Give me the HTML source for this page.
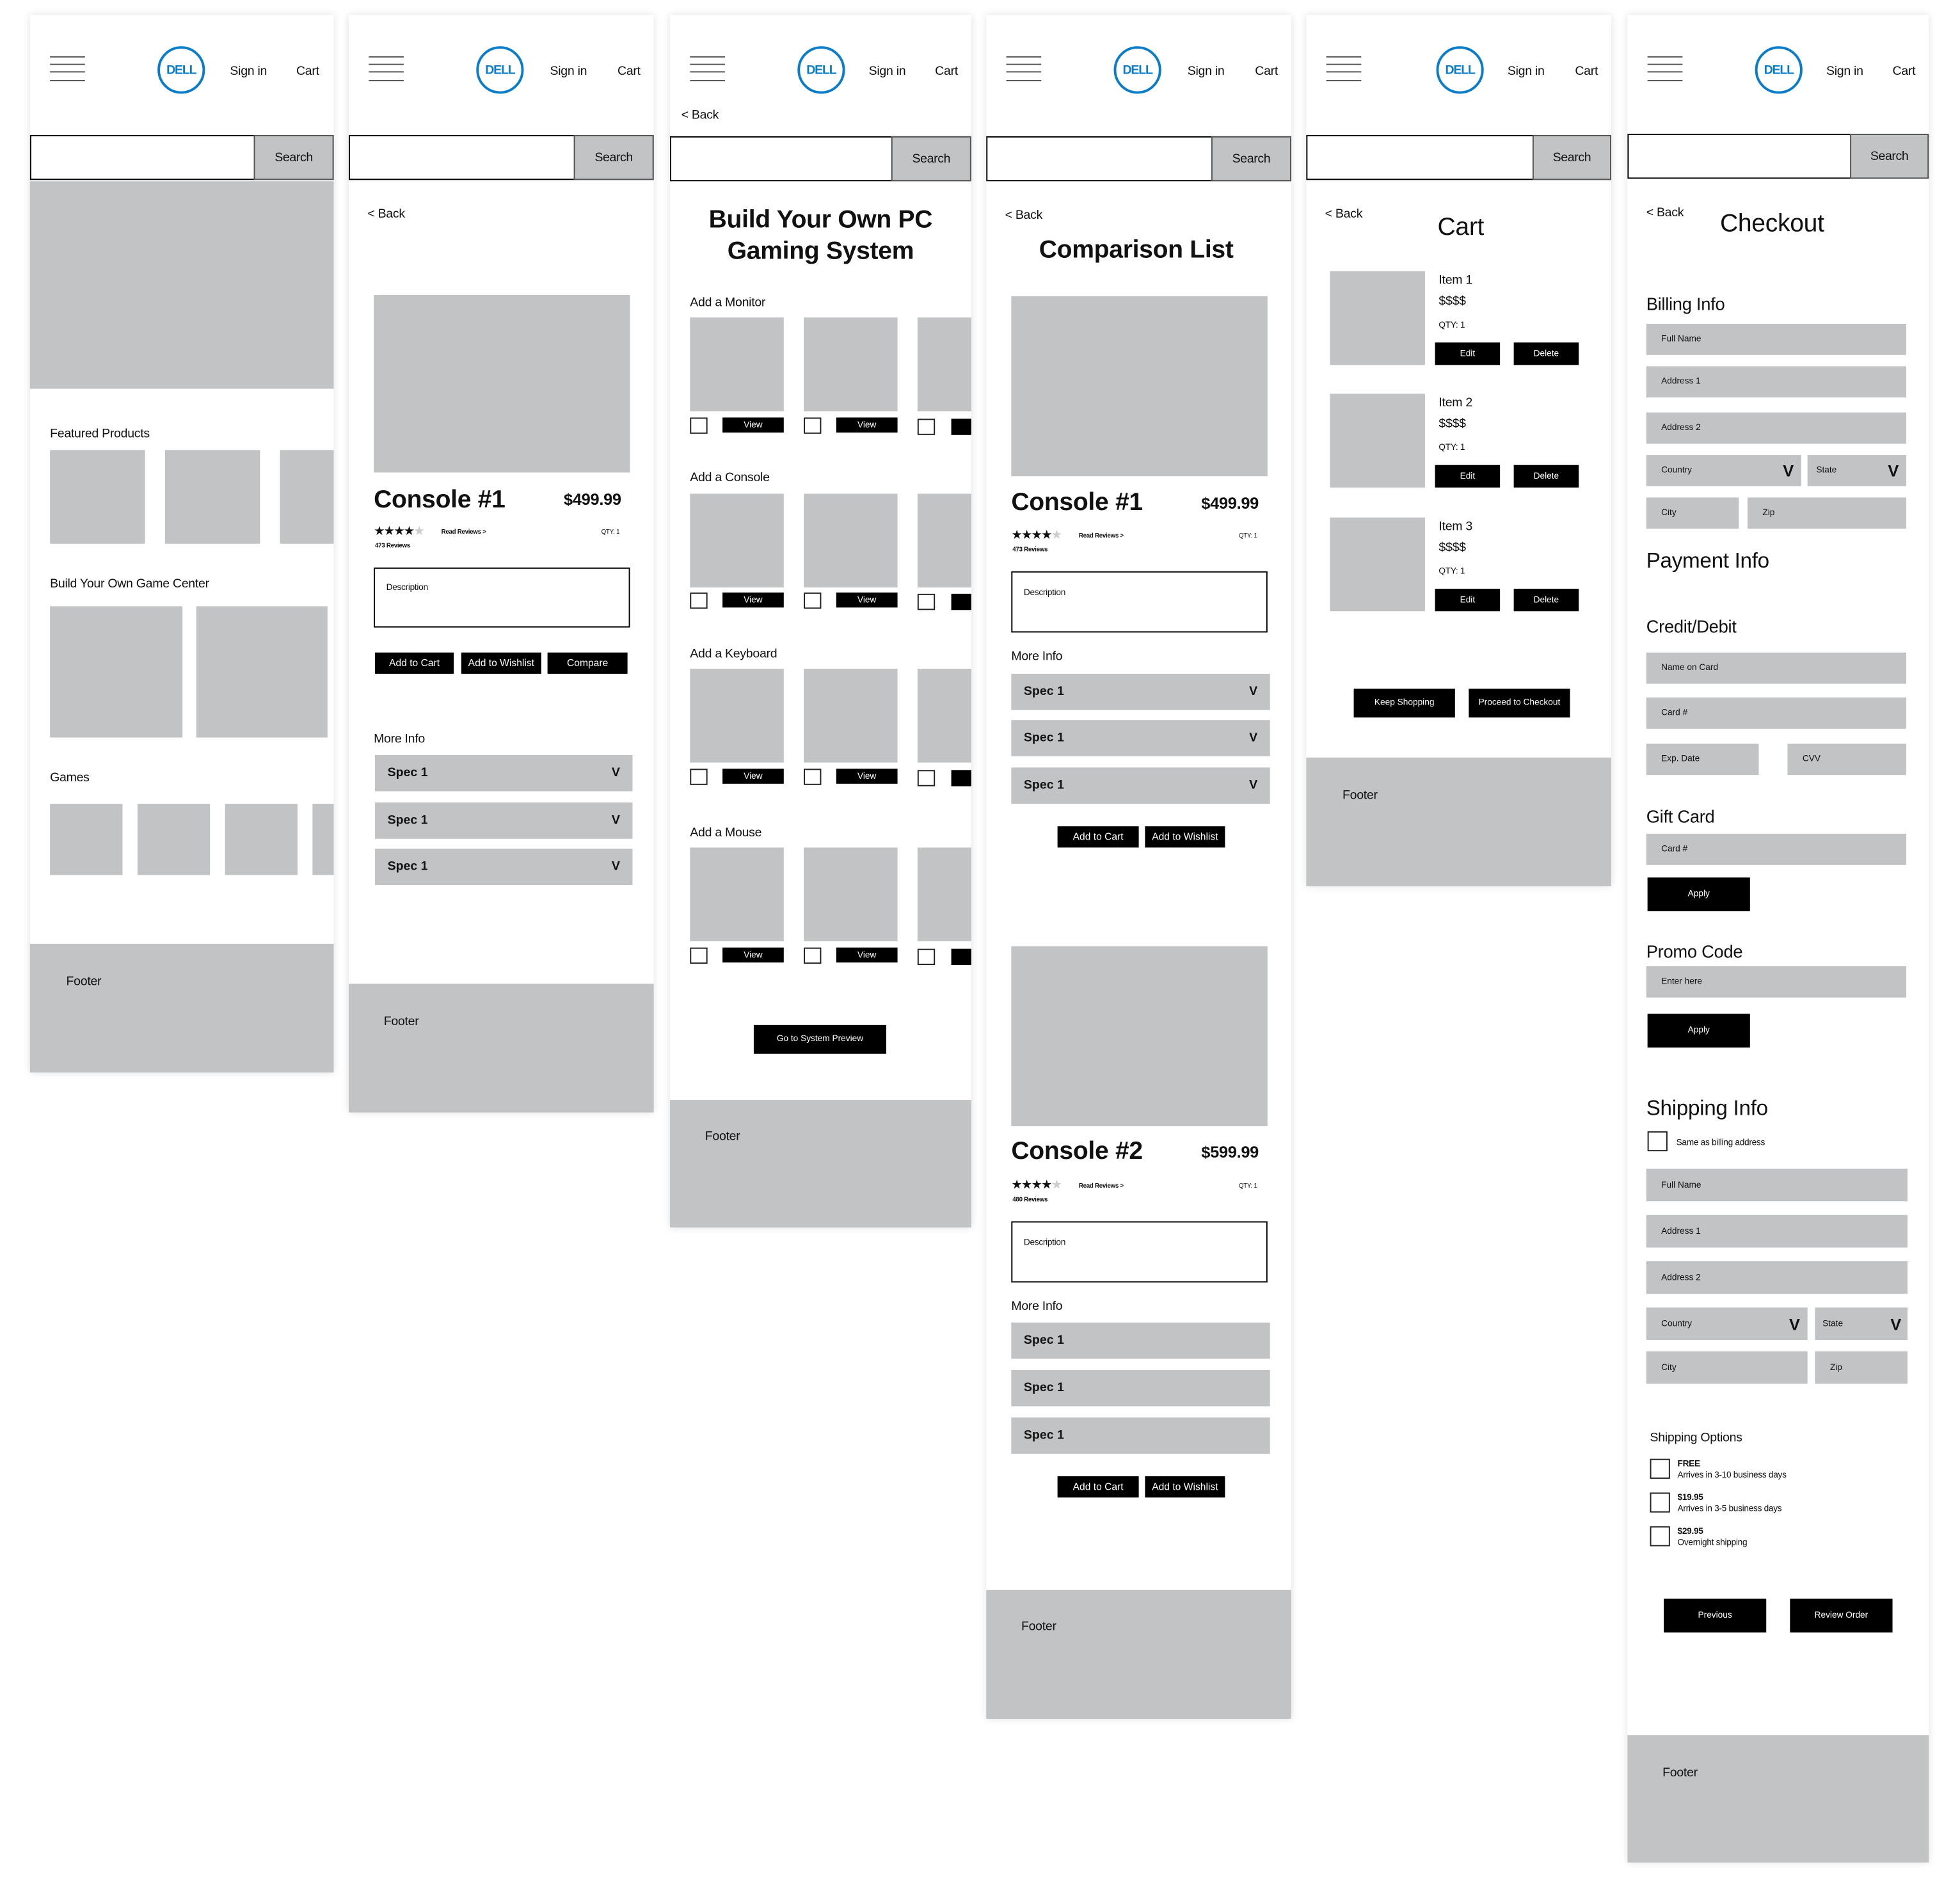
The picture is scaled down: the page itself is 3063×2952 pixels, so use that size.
<!DOCTYPE html>
<html><head><meta charset="utf-8">
<style>
*{margin:0;padding:0;box-sizing:border-box}
html,body{width:3063px;height:2952px;background:#fff;overflow:hidden}
body{font-family:"Liberation Sans",Arial,sans-serif;color:#111}
#w{position:absolute;left:0;top:0;width:1568px;height:1511px;transform:scale(1.95345);transform-origin:0 0}
.p{position:absolute;top:12px;background:#fff;box-shadow:0 0 6px rgba(0,0,0,.13)}
.a{position:absolute}
.g{position:absolute;background:#c2c3c4}
.k{position:absolute;background:#000;color:#fff;display:flex;align-items:center;justify-content:center;white-space:nowrap}
.t{position:absolute;line-height:1;white-space:nowrap;margin-top:1px;letter-spacing:-.15px}
.fd{position:absolute;background:#c2c3c4;display:flex;align-items:center;padding-left:12px;font-size:7px}
.cb{position:absolute;border:1px solid #222;background:#fff}
.ham{position:absolute;left:16px;top:33px;width:28px;height:20px}
.ham i{position:absolute;left:0;width:28px;height:1px;background:#555}
.logo{position:absolute;left:102px;top:25px;width:38px;height:38px;border:2px solid #0b7dc8;border-radius:50%;display:flex;align-items:center;justify-content:center;color:#0b7dc8;font-weight:900;font-size:10px;letter-spacing:-.6px}
.sb{position:absolute;left:0;top:96px;height:36px;border:1px solid #000;background:#fff}
.sbb{position:absolute;top:96px;height:36px;background:#c2c3c4;border:1px solid #555;display:flex;align-items:center;justify-content:center;font-size:10px;letter-spacing:-.2px}
.spec{position:absolute;background:#c2c3c4;display:flex;align-items:center;justify-content:space-between;padding:0 10px;font-weight:bold;font-size:10px}
.foot{position:absolute;left:0;background:#c2c3c4}
.st{font-size:10px;letter-spacing:-1px}
</style></head><body><div id="w">

<!-- PANEL 1 -->
<div class="p" style="left:24px;width:243px;height:846px">
 <div class="ham"><i style="top:0"></i><i style="top:6px"></i><i style="top:12px"></i><i style="top:19px"></i></div>
 <div class="logo">DELL</div>
 <div class="t" style="left:160px;top:40px;font-size:10px">Sign in</div>
 <div class="t" style="left:213px;top:40px;font-size:10px">Cart</div>
 <div class="sb" style="width:243px"></div>
 <div class="sbb" style="left:179px;width:64px">Search</div>
 <div class="g" style="left:0;top:133px;width:243px;height:166px"></div>
 <div class="t" style="left:16px;top:330px;font-size:10px">Featured Products</div>
 <div class="g" style="left:16px;top:348px;width:76px;height:75px"></div>
 <div class="g" style="left:108px;top:348px;width:76px;height:75px"></div>
 <div class="g" style="left:200px;top:348px;width:43px;height:75px"></div>
 <div class="t" style="left:16px;top:450px;font-size:10px">Build Your Own Game Center</div>
 <div class="g" style="left:16px;top:473px;width:106px;height:105px"></div>
 <div class="g" style="left:133px;top:473px;width:105px;height:105px"></div>
 <div class="t" style="left:16px;top:605px;font-size:10px">Games</div>
 <div class="g" style="left:16px;top:631px;width:58px;height:57px"></div>
 <div class="g" style="left:86px;top:631px;width:58px;height:57px"></div>
 <div class="g" style="left:156px;top:631px;width:58px;height:57px"></div>
 <div class="g" style="left:226px;top:631px;width:17px;height:57px"></div>
 <div class="foot" style="top:743px;width:243px;height:103px"><div class="t" style="left:29px;top:25px;font-size:10px">Footer</div></div>
</div>

<!-- PANEL 2 -->
<div class="p" style="left:279px;width:244px;height:878px">
 <div class="ham"><i style="top:0"></i><i style="top:6px"></i><i style="top:12px"></i><i style="top:19px"></i></div>
 <div class="logo">DELL</div>
 <div class="t" style="left:161px;top:40px;font-size:10px">Sign in</div>
 <div class="t" style="left:215px;top:40px;font-size:10px">Cart</div>
 <div class="sb" style="width:244px"></div>
 <div class="sbb" style="left:180px;width:64px">Search</div>
 <div class="t" style="left:15px;top:154px;font-size:10px">&lt; Back</div>
 <div class="g" style="left:20px;top:224px;width:205px;height:142px"></div>
 <div class="t" style="left:20px;top:377px;font-size:20px;font-weight:bold">Console #1</div>
 <div class="t" style="left:172px;top:380px;font-size:13px;font-weight:bold">$499.99</div>
 <div class="t st" style="left:20px;top:408px">★★★★<span style="color:#ccc">★</span></div>
 <div class="t" style="left:74px;top:411px;font-size:5px;font-weight:bold">Read Reviews &gt;</div>
 <div class="t" style="left:202px;top:411px;font-size:5px">QTY: 1</div>
 <div class="t" style="left:21px;top:422px;font-size:5px;font-weight:bold">473 Reviews</div>
 <div class="a" style="left:20px;top:442px;width:205px;height:48px;border:1px solid #000"><div class="t" style="left:9px;top:11px;font-size:7px">Description</div></div>
 <div class="k" style="left:21px;top:510px;width:63px;height:17px;font-size:8px">Add to Cart</div>
 <div class="k" style="left:90px;top:510px;width:64px;height:17px;font-size:8px">Add to Wishlist</div>
 <div class="k" style="left:159px;top:510px;width:64px;height:17px;font-size:8px">Compare</div>
 <div class="t" style="left:20px;top:574px;font-size:10px">More Info</div>
 <div class="spec" style="left:21px;top:592px;width:206px;height:29px"><span>Spec 1</span><span>V</span></div>
 <div class="spec" style="left:21px;top:630px;width:206px;height:29px"><span>Spec 1</span><span>V</span></div>
 <div class="spec" style="left:21px;top:667px;width:206px;height:29px"><span>Spec 1</span><span>V</span></div>
 <div class="foot" style="top:775px;width:244px;height:103px"><div class="t" style="left:28px;top:25px;font-size:10px">Footer</div></div>
</div>

<!-- PANEL 3 -->
<div class="p" style="left:536px;width:241px;height:970px">
 <div class="ham"><i style="top:0"></i><i style="top:6px"></i><i style="top:12px"></i><i style="top:19px"></i></div>
 <div class="logo">DELL</div>
 <div class="t" style="left:159px;top:40px;font-size:10px">Sign in</div>
 <div class="t" style="left:212px;top:40px;font-size:10px">Cart</div>
 <div class="t" style="left:9px;top:75px;font-size:10px">&lt; Back</div>
 <div class="sb" style="top:97px;width:241px"></div>
 <div class="sbb" style="top:97px;left:177px;width:64px">Search</div>
 <div class="t" style="left:0;width:241px;top:151px;font-size:20px;font-weight:bold;text-align:center;line-height:25px">Build Your Own PC<br>Gaming System</div>

 <div class="t" style="left:16px;top:225px;font-size:10px">Add a Monitor</div>
 <div class="g" style="left:16px;top:242px;width:75px;height:75px"></div><div class="g" style="left:107px;top:242px;width:75px;height:75px"></div><div class="g" style="left:198px;top:242px;width:43px;height:75px"></div>
 <div class="cb" style="left:16px;top:322px;width:14px;height:13px"></div><div class="k" style="left:42px;top:322px;width:49px;height:12px;font-size:7px">View</div>
 <div class="cb" style="left:107px;top:322px;width:14px;height:13px"></div><div class="k" style="left:133px;top:322px;width:49px;height:12px;font-size:7px">View</div>
 <div class="cb" style="left:198px;top:323px;width:14px;height:13px"></div><div class="k" style="left:225px;top:323px;width:16px;height:13px"></div>

 <div class="t" style="left:16px;top:365px;font-size:10px">Add a Console</div>
 <div class="g" style="left:16px;top:383px;width:75px;height:75px"></div><div class="g" style="left:107px;top:383px;width:75px;height:75px"></div><div class="g" style="left:198px;top:383px;width:43px;height:75px"></div>
 <div class="cb" style="left:16px;top:462px;width:14px;height:13px"></div><div class="k" style="left:42px;top:462px;width:49px;height:12px;font-size:7px">View</div>
 <div class="cb" style="left:107px;top:462px;width:14px;height:13px"></div><div class="k" style="left:133px;top:462px;width:49px;height:12px;font-size:7px">View</div>
 <div class="cb" style="left:198px;top:463px;width:14px;height:13px"></div><div class="k" style="left:225px;top:463px;width:16px;height:13px"></div>

 <div class="t" style="left:16px;top:506px;font-size:10px">Add a Keyboard</div>
 <div class="g" style="left:16px;top:523px;width:75px;height:75px"></div><div class="g" style="left:107px;top:523px;width:75px;height:75px"></div><div class="g" style="left:198px;top:523px;width:43px;height:75px"></div>
 <div class="cb" style="left:16px;top:603px;width:14px;height:13px"></div><div class="k" style="left:42px;top:603px;width:49px;height:12px;font-size:7px">View</div>
 <div class="cb" style="left:107px;top:603px;width:14px;height:13px"></div><div class="k" style="left:133px;top:603px;width:49px;height:12px;font-size:7px">View</div>
 <div class="cb" style="left:198px;top:604px;width:14px;height:13px"></div><div class="k" style="left:225px;top:604px;width:16px;height:13px"></div>

 <div class="t" style="left:16px;top:649px;font-size:10px">Add a Mouse</div>
 <div class="g" style="left:16px;top:666px;width:75px;height:75px"></div><div class="g" style="left:107px;top:666px;width:75px;height:75px"></div><div class="g" style="left:198px;top:666px;width:43px;height:75px"></div>
 <div class="cb" style="left:16px;top:746px;width:14px;height:13px"></div><div class="k" style="left:42px;top:746px;width:49px;height:12px;font-size:7px">View</div>
 <div class="cb" style="left:107px;top:746px;width:14px;height:13px"></div><div class="k" style="left:133px;top:746px;width:49px;height:12px;font-size:7px">View</div>
 <div class="cb" style="left:198px;top:747px;width:14px;height:13px"></div><div class="k" style="left:225px;top:747px;width:16px;height:13px"></div>

 <div class="k" style="left:67px;top:808px;width:106px;height:23px;font-size:7px">Go to System Preview</div>
 <div class="foot" style="top:868px;width:241px;height:102px"><div class="t" style="left:28px;top:24px;font-size:10px">Footer</div></div>
</div>

<!-- PANEL 4 -->
<div class="p" style="left:789px;width:244px;height:1363px">
 <div class="ham"><i style="top:0"></i><i style="top:6px"></i><i style="top:12px"></i><i style="top:19px"></i></div>
 <div class="logo">DELL</div>
 <div class="t" style="left:161px;top:40px;font-size:10px">Sign in</div>
 <div class="t" style="left:215px;top:40px;font-size:10px">Cart</div>
 <div class="sb" style="width:244px;top:97px"></div>
 <div class="sbb" style="top:97px;left:180px;width:64px">Search</div>
 <div class="t" style="left:15px;top:155px;font-size:10px">&lt; Back</div>
 <div class="t" style="left:0;width:240px;text-align:center;top:177px;font-size:20px;font-weight:bold">Comparison List</div>
 <div class="g" style="left:20px;top:225px;width:205px;height:144px"></div>
 <div class="t" style="left:20px;top:379px;font-size:20px;font-weight:bold">Console #1</div>
 <div class="t" style="left:172px;top:383px;font-size:13px;font-weight:bold">$499.99</div>
 <div class="t st" style="left:20px;top:411px">★★★★<span style="color:#ccc">★</span></div>
 <div class="t" style="left:74px;top:414px;font-size:5px;font-weight:bold">Read Reviews &gt;</div>
 <div class="t" style="left:202px;top:414px;font-size:5px">QTY: 1</div>
 <div class="t" style="left:21px;top:425px;font-size:5px;font-weight:bold">473 Reviews</div>
 <div class="a" style="left:20px;top:445px;width:205px;height:49px;border:1px solid #000"><div class="t" style="left:9px;top:12px;font-size:7px">Description</div></div>
 <div class="t" style="left:20px;top:508px;font-size:10px">More Info</div>
 <div class="spec" style="left:20px;top:527px;width:207px;height:29px"><span>Spec 1</span><span>V</span></div>
 <div class="spec" style="left:20px;top:564px;width:207px;height:29px"><span>Spec 1</span><span>V</span></div>
 <div class="spec" style="left:20px;top:602px;width:207px;height:29px"><span>Spec 1</span><span>V</span></div>
 <div class="k" style="left:57px;top:649px;width:65px;height:17px;font-size:8px">Add to Cart</div>
 <div class="k" style="left:127px;top:649px;width:64px;height:17px;font-size:8px">Add to Wishlist</div>

 <div class="g" style="left:20px;top:745px;width:205px;height:144px"></div>
 <div class="t" style="left:20px;top:898px;font-size:20px;font-weight:bold">Console #2</div>
 <div class="t" style="left:172px;top:902px;font-size:13px;font-weight:bold">$599.99</div>
 <div class="t st" style="left:20px;top:931px">★★★★<span style="color:#ccc">★</span></div>
 <div class="t" style="left:74px;top:934px;font-size:5px;font-weight:bold">Read Reviews &gt;</div>
 <div class="t" style="left:202px;top:934px;font-size:5px">QTY: 1</div>
 <div class="t" style="left:21px;top:945px;font-size:5px;font-weight:bold">480 Reviews</div>
 <div class="a" style="left:20px;top:965px;width:205px;height:49px;border:1px solid #000"><div class="t" style="left:9px;top:12px;font-size:7px">Description</div></div>
 <div class="t" style="left:20px;top:1028px;font-size:10px">More Info</div>
 <div class="spec" style="left:20px;top:1046px;width:207px;height:29px"><span>Spec 1</span></div>
 <div class="spec" style="left:20px;top:1084px;width:207px;height:29px"><span>Spec 1</span></div>
 <div class="spec" style="left:20px;top:1122px;width:207px;height:29px"><span>Spec 1</span></div>
 <div class="k" style="left:57px;top:1169px;width:65px;height:17px;font-size:8px">Add to Cart</div>
 <div class="k" style="left:127px;top:1169px;width:64px;height:17px;font-size:8px">Add to Wishlist</div>
 <div class="foot" style="top:1260px;width:244px;height:103px"><div class="t" style="left:28px;top:24px;font-size:10px">Footer</div></div>
</div>

<!-- PANEL 5 -->
<div class="p" style="left:1045px;width:244px;height:697px">
 <div class="ham"><i style="top:0"></i><i style="top:6px"></i><i style="top:12px"></i><i style="top:19px"></i></div>
 <div class="logo" style="left:104px">DELL</div>
 <div class="t" style="left:161px;top:40px;font-size:10px">Sign in</div>
 <div class="t" style="left:215px;top:40px;font-size:10px">Cart</div>
 <div class="sb" style="width:244px"></div>
 <div class="sbb" style="left:181px;width:63px">Search</div>
 <div class="t" style="left:15px;top:154px;font-size:10px">&lt; Back</div>
 <div class="t" style="left:105px;top:159px;font-size:20px">Cart</div>

 <div class="g" style="left:19px;top:205px;width:76px;height:75px"></div>
 <div class="t" style="left:106px;top:207px;font-size:10px">Item 1</div>
 <div class="t" style="left:106px;top:224px;font-size:10px">$$$$</div>
 <div class="t" style="left:106px;top:244px;font-size:7px">QTY: 1</div>
 <div class="k" style="left:103px;top:262px;width:52px;height:18px;font-size:7px">Edit</div>
 <div class="k" style="left:166px;top:262px;width:52px;height:18px;font-size:7px">Delete</div>

 <div class="g" style="left:19px;top:303px;width:76px;height:75px"></div>
 <div class="t" style="left:106px;top:305px;font-size:10px">Item 2</div>
 <div class="t" style="left:106px;top:322px;font-size:10px">$$$$</div>
 <div class="t" style="left:106px;top:342px;font-size:7px">QTY: 1</div>
 <div class="k" style="left:103px;top:360px;width:52px;height:18px;font-size:7px">Edit</div>
 <div class="k" style="left:166px;top:360px;width:52px;height:18px;font-size:7px">Delete</div>

 <div class="g" style="left:19px;top:402px;width:76px;height:75px"></div>
 <div class="t" style="left:106px;top:404px;font-size:10px">Item 3</div>
 <div class="t" style="left:106px;top:421px;font-size:10px">$$$$</div>
 <div class="t" style="left:106px;top:441px;font-size:7px">QTY: 1</div>
 <div class="k" style="left:103px;top:459px;width:52px;height:18px;font-size:7px">Edit</div>
 <div class="k" style="left:166px;top:459px;width:52px;height:18px;font-size:7px">Delete</div>

 <div class="k" style="left:38px;top:539px;width:81px;height:23px;font-size:7px">Keep Shopping</div>
 <div class="k" style="left:130px;top:539px;width:81px;height:23px;font-size:7px">Proceed to Checkout</div>
 <div class="foot" style="top:594px;width:244px;height:103px"><div class="t" style="left:29px;top:25px;font-size:10px">Footer</div></div>
</div>

<!-- PANEL 6 -->
<div class="p" style="left:1302px;width:241px;height:1478px">
 <div class="ham"><i style="top:0"></i><i style="top:6px"></i><i style="top:12px"></i><i style="top:19px"></i></div>
 <div class="logo">DELL</div>
 <div class="t" style="left:159px;top:40px;font-size:10px">Sign in</div>
 <div class="t" style="left:212px;top:40px;font-size:10px">Cart</div>
 <div class="sb" style="width:241px;top:95px"></div>
 <div class="sbb" style="top:95px;left:178px;width:63px">Search</div>
 <div class="t" style="left:15px;top:153px;font-size:10px">&lt; Back</div>
 <div class="t" style="left:74px;top:156px;font-size:20px">Checkout</div>

 <div class="t" style="left:15px;top:223px;font-size:14px">Billing Info</div>
 <div class="fd" style="left:15px;top:247px;width:208px;height:25px">Full Name</div>
 <div class="fd" style="left:15px;top:281px;width:208px;height:25px">Address 1</div>
 <div class="fd" style="left:15px;top:318px;width:208px;height:25px">Address 2</div>
 <div class="fd" style="left:15px;top:352px;width:124px;height:25px;justify-content:space-between;padding-right:6px">Country<b style="font-size:13px">V</b></div>
 <div class="fd" style="left:144px;top:352px;width:79px;height:25px;justify-content:space-between;padding-right:6px;padding-left:7px">State<b style="font-size:13px">V</b></div>
 <div class="fd" style="left:15px;top:386px;width:74px;height:25px">City</div>
 <div class="fd" style="left:96px;top:386px;width:127px;height:25px">Zip</div>

 <div class="t" style="left:15px;top:427px;font-size:17px">Payment Info</div>
 <div class="t" style="left:15px;top:481px;font-size:14px">Credit/Debit</div>
 <div class="fd" style="left:15px;top:510px;width:208px;height:25px">Name on Card</div>
 <div class="fd" style="left:15px;top:546px;width:208px;height:25px">Card #</div>
 <div class="fd" style="left:15px;top:583px;width:90px;height:25px">Exp. Date</div>
 <div class="fd" style="left:128px;top:583px;width:95px;height:25px">CVV</div>

 <div class="t" style="left:15px;top:633px;font-size:14px">Gift Card</div>
 <div class="fd" style="left:15px;top:655px;width:208px;height:25px">Card #</div>
 <div class="k" style="left:16px;top:690px;width:82px;height:27px;font-size:7px">Apply</div>

 <div class="t" style="left:15px;top:741px;font-size:14px">Promo Code</div>
 <div class="fd" style="left:15px;top:761px;width:208px;height:25px">Enter here</div>
 <div class="k" style="left:16px;top:799px;width:82px;height:27px;font-size:7px">Apply</div>

 <div class="t" style="left:15px;top:865px;font-size:17px">Shipping Info</div>
 <div class="cb" style="left:16px;top:893px;width:16px;height:16px"></div>
 <div class="t" style="left:39px;top:898px;font-size:7px">Same as billing address</div>
 <div class="fd" style="left:15px;top:923px;width:209px;height:26px">Full Name</div>
 <div class="fd" style="left:15px;top:960px;width:209px;height:26px">Address 1</div>
 <div class="fd" style="left:15px;top:997px;width:209px;height:26px">Address 2</div>
 <div class="fd" style="left:15px;top:1034px;width:129px;height:26px;justify-content:space-between;padding-right:6px">Country<b style="font-size:13px">V</b></div>
 <div class="fd" style="left:150px;top:1034px;width:74px;height:26px;justify-content:space-between;padding-right:5px;padding-left:6px">State<b style="font-size:13px">V</b></div>
 <div class="fd" style="left:15px;top:1069px;width:129px;height:26px">City</div>
 <div class="fd" style="left:150px;top:1069px;width:74px;height:26px">Zip</div>

 <div class="t" style="left:18px;top:1133px;font-size:10px">Shipping Options</div>
 <div class="cb" style="left:18px;top:1155px;width:16px;height:16px"></div>
 <div class="t" style="left:40px;top:1154px;font-size:7px;line-height:9px"><b>FREE</b><br>Arrives in 3-10 business days</div>
 <div class="cb" style="left:18px;top:1182px;width:16px;height:16px"></div>
 <div class="t" style="left:40px;top:1181px;font-size:7px;line-height:9px"><b>$19.95</b><br>Arrives in 3-5 business days</div>
 <div class="cb" style="left:18px;top:1209px;width:16px;height:16px"></div>
 <div class="t" style="left:40px;top:1208px;font-size:7px;line-height:9px"><b>$29.95</b><br>Overnight shipping</div>

 <div class="k" style="left:29px;top:1267px;width:82px;height:27px;font-size:7px">Previous</div>
 <div class="k" style="left:130px;top:1267px;width:82px;height:27px;font-size:7px">Review Order</div>
 <div class="foot" style="top:1376px;width:241px;height:102px"><div class="t" style="left:28px;top:25px;font-size:10px">Footer</div></div>
</div>

</div></body></html>
